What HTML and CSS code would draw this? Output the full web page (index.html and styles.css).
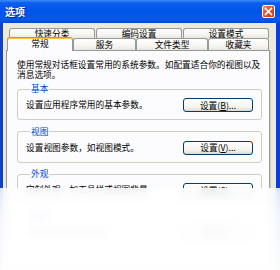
FILE: index.html
```html
<!DOCTYPE html>
<html lang="zh-CN">
<head>
<meta charset="utf-8">
<title>选项</title>
<link rel="stylesheet" href="styles.css">
</head>
<body>
<div class="window">
  <div class="titlebar">
    <span class="title">选项</span>
    <span class="close"><svg width="9" height="9" viewBox="0 0 9 9"><path d="M1.5 1.5 L7.5 7.5 M7.5 1.5 L1.5 7.5" stroke="#fff" stroke-width="1.6" stroke-linecap="square"/></svg></span>
  </div>
  <div class="body">
    <div class="tabrow back">
      <div class="tab">快速分类</div>
      <div class="tab">编码设置</div>
      <div class="tab">设置模式</div>
    </div>
    <div class="tabrow front">
      <div class="tab sel">常规</div>
      <div class="tab">服务</div>
      <div class="tab">文件类型</div>
      <div class="tab">收藏夹</div>
    </div>
    <div class="panel">
      <p class="intro">使用常规对话框设置常用的系统参数。如配置适合你的视图以及<br>消息选项。</p>
      <fieldset class="group">
        <legend>基本</legend>
        <div class="row"><span>设置应用程序常用的基本参数。</span><button class="btn">设置(<u>B</u>)...</button></div>
      </fieldset>
      <fieldset class="group">
        <legend>视图</legend>
        <div class="row"><span>设置视图参数，如视图模式。</span><button class="btn">设置(<u>V</u>)...</button></div>
      </fieldset>
      <fieldset class="group">
        <legend>外观</legend>
        <div class="row"><span>定制外观，加工具栏或视图背景</span><button class="btn">设置(<u>S</u>)...</button></div>
      </fieldset>
      <fieldset class="group">
        <legend>其他</legend>
        <div class="row"><span>设置其他常用的选项。</span><button class="btn">设置(<u>O</u>)...</button></div>
      </fieldset>
    </div>
  </div>
  <div class="fade"></div>
</div>
</body>
</html>
```
FILE: styles.css
```css
html, body {
  margin: 0;
  padding: 0;
}
body {
  width: 280px;
  height: 270px;
  overflow: hidden;
  background: #ffffff;
  font-family: "Noto Sans CJK SC", "Liberation Sans", sans-serif;
  font-size: 8.7px;
  color: #000;
}
.window {
  position: relative;
  height: 270px;
  display: flex;
  flex-direction: column;
}
.titlebar {
  height: 23px;
  flex: 0 0 23px;
  display: flex;
  align-items: center;
  justify-content: space-between;
  padding: 0 5px 0 5px;
  box-sizing: border-box;
  background: linear-gradient(to bottom, #3c8cf8 0px, #0a5ef0 3px, #0055e6 45%, #0258ec 85%, #0046d8 100%);
}
.title {
  color: #fff;
  font-weight: bold;
  font-size: 10px;
  line-height: 12px;
  text-shadow: 1px 1px 0 #0b2a8c;
}
.close {
  width: 13px;
  height: 13px;
  box-sizing: border-box;
  border: 1px solid #fff;
  border-radius: 2px;
  background: linear-gradient(135deg, #f08a68 0%, #e0542e 45%, #c8391a 100%);
  display: flex;
  align-items: center;
  justify-content: center;
}
.close svg {
  display: block;
}
.body {
  flex: 1;
  display: flex;
  flex-direction: column;
  background: #ece9d8;
  border-left: 3px solid #0a3fd8;
  border-right: 4px solid #0a3fd8;
  padding: 5px 6px 0 3px;
}
.tabrow {
  display: flex;
  margin: 0 1px 0 3px;
  height: 10px;
}
.tabrow.back {
  gap: 1px;
}
.tabrow.front {
  height: 12px;
  position: relative;
  z-index: 2;
}
.tab {
  flex: 1;
  box-sizing: border-box;
  border: 1px solid #919b9c;
  border-bottom: none;
  border-radius: 3px 3px 0 0;
  background: linear-gradient(to bottom, #ffffff 0%, #f6f5f1 60%, #e9e7de 100%);
  text-align: center;
  line-height: 9px;
  font-size: 8.7px;
  white-space: nowrap;
}
.front .tab {
  flex: 0 0 auto;
  line-height: 11px;
}
.front .tab:nth-child(1) { width: 64px; }
.front .tab:nth-child(2) { width: 63px; }
.front .tab:nth-child(3) { width: 72px; }
.front .tab:nth-child(4) { width: 61px; }
.tab.sel {
  width: 66px !important;
  margin-left: -2px;
  margin-top: -1px;
  height: 14px;
  background: #fcfcfe;
  border-top: 1px solid #e68b2c;
  box-shadow: inset 0 1px 0 #ffc83c;
  line-height: 12px;
}
.panel {
  flex: 1;
  background: #fcfcfe;
  border: 1px solid #919b9c;
  box-shadow: 1px 1px 0 #d0cdbf;
  padding: 9px 7px 0 10px;
  position: relative;
  z-index: 1;
}
.intro {
  margin: 0 0 4px 0;
  line-height: 10px;
  white-space: nowrap;
}
.group {
  margin: 0 0 6.5px 0;
  border: 1px solid #d0d0bf;
  border-radius: 3px;
  padding: 4px 8px 7px 8px;
}
.group legend {
  color: #0046d5;
  padding: 0 1px;
  margin-left: 4px;
  line-height: 10px;
}
.row {
  display: flex;
  align-items: center;
  justify-content: space-between;
  height: 14px;
  line-height: 10px;
  white-space: nowrap;
}
.btn {
  width: 70px;
  height: 14px;
  padding: 0;
  box-sizing: border-box;
  border: 1px solid #003c74;
  border-radius: 3px;
  background: linear-gradient(to bottom, #ffffff 0%, #f4f3ee 70%, #dcd8cb 100%);
  font-family: inherit;
  font-size: 8.7px;
  line-height: 11px;
  color: #000;
}
.fade {
  position: absolute;
  left: 0;
  right: 0;
  top: 188px;
  bottom: 0;
  z-index: 5;
  background: linear-gradient(to bottom, rgba(255,255,255,0.84) 0%, rgba(255,255,255,0.93) 30%, rgba(255,255,255,0.98) 100%);
  backdrop-filter: blur(4px);
}
```
